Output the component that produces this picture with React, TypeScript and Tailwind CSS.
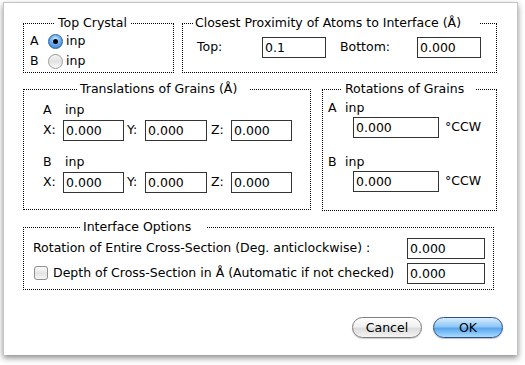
import React from "react"

const font = { fontFamily: '"DejaVu Sans", "Liberation Sans", sans-serif' }

function Field({ value, w }: { value: string; w: string }) {
  return (
    <input
      readOnly
      value={value}
      className={`${w} h-[21px] border border-[#333] bg-white pl-[2px] text-[12.5px] text-black outline-none`}
    />
  )
}

function Radio({ on }: { on?: boolean }) {
  if (on)
    return (
      <span className="flex h-[15px] w-[15px] items-center justify-center rounded-full border border-[#2f5fa8] bg-[radial-gradient(circle_at_50%_35%,#d6ecff_0%,#6fb1ee_45%,#2b73c9_100%)]">
        <span className="h-[5px] w-[5px] rounded-full bg-black" />
      </span>
    )
  return (
    <span className="h-[15px] w-[15px] rounded-full border border-[#9a9a9a] bg-[linear-gradient(#f4f4f4,#e2e2e2_50%,#fafafa)]" />
  )
}

export default function App() {
  return (
    <div className="h-[365px] w-[525px] overflow-hidden bg-white text-[12.5px] text-black" style={font}>
      <div className="ml-[3px] mt-[2px] h-[353px] w-[515px] border-l border-t border-r border-[#c4c4c4] bg-white shadow-[0_3px_6px_rgba(0,0,0,0.45)]">
        {/* row 1 */}
        <div className="ml-[19px] mt-[12px] flex items-start">
          <fieldset className="h-[58px] w-[151px] border border-dotted border-black">
            <legend className="ml-[31px] px-[3px] leading-[16px]">Top Crystal</legend>
            <div className="flex h-[20px] items-center pl-[6px]">
              <span className="w-[18px]">A</span>
              <Radio on />
              <span className="ml-[3px]">inp</span>
            </div>
            <div className="flex h-[20px] items-center pl-[6px]">
              <span className="w-[18px]">B</span>
              <Radio />
              <span className="ml-[3px]">inp</span>
            </div>
          </fieldset>
          <fieldset className="ml-[8px] h-[58px] w-[315px] border border-dotted border-black">
            <legend className="ml-[10px] pl-[2px] pr-[18px] leading-[16px]">Closest Proximity of Atoms to Interface (Å)</legend>
            <div className="mt-[6px] flex items-center">
              <span className="ml-[14px] w-[65px]">Top:</span>
              <Field value="0.1" w="w-[64px]" />
              <span className="ml-[14px] w-[77px]">Bottom:</span>
              <Field value="0.000" w="w-[64px]" />
            </div>
          </fieldset>
        </div>

        {/* row 2 */}
        <div className="ml-[19px] mt-[8px] flex items-start">
          <fieldset className="h-[129px] w-[288px] border border-dotted border-black">
            <legend className="ml-[53px] pl-[3px] pr-[13px] leading-[16px]">Translations of Grains (Å)</legend>
            {[
              { k: "A", mt: "mt-[4px]" },
              { k: "B", mt: "mt-[12px]" },
            ].map((g) => (
              <div key={g.k} className={`${g.mt} pl-[19px]`}>
                <div className="flex h-[18px] items-center">
                  <span className="w-[22px]">{g.k}</span>
                  <span>inp</span>
                </div>
                <div className="mt-[1px] flex h-[21px] items-center">
                  <span className="w-[20px]">X:</span>
                  <Field value="0.000" w="w-[61px]" />
                  <span className="ml-[3px] w-[18px]">Y:</span>
                  <Field value="0.000" w="w-[62px]" />
                  <span className="ml-[4px] w-[20px]">Z:</span>
                  <Field value="0.000" w="w-[61px]" />
                </div>
              </div>
            ))}
          </fieldset>
          <fieldset className="ml-[11px] h-[130px] w-[175px] border border-dotted border-black">
            <legend className="ml-[19px] pl-[3px] pr-[12px] leading-[16px]">Rotations of Grains</legend>
            {[
              { k: "A", mt: "mt-[2px]" },
              { k: "B", mt: "mt-[15px]" },
            ].map((g) => (
              <div key={g.k} className={`${g.mt} pl-[5px]`}>
                <div className="flex h-[18px] items-center">
                  <span className="w-[17px]">{g.k}</span>
                  <span>inp</span>
                </div>
                <div className="flex h-[21px] items-center pl-[25px]">
                  <Field value="0.000" w="w-[86px]" />
                  <span className="ml-[6px]">°CCW</span>
                </div>
              </div>
            ))}
          </fieldset>
        </div>

        {/* row 3 */}
        <fieldset className="ml-[19px] mt-[8px] h-[71px] w-[471px] border border-dotted border-black">
          <legend className="ml-[56px] pl-[3px] pr-[15px] leading-[16px]">Interface Options</legend>
          <div className="mt-[2px] flex h-[22px] items-center pl-[9px] pr-[8px]">
            <span className="flex-1 whitespace-nowrap">Rotation of Entire Cross-Section (Deg. anticlockwise) :</span>
            <Field value="0.000" w="w-[78px]" />
          </div>
          <div className="mt-[3px] flex h-[22px] items-center pl-[10px] pr-[8px]">
            <span className="h-[14px] w-[14px] rounded-[3px] border border-[#8e8e8e] bg-[linear-gradient(#fbfbfb,#e4e4e4_55%,#f6f6f6)]" />
            <span className="ml-[5px] flex-1 whitespace-nowrap">Depth of Cross-Section in Å (Automatic if not checked)</span>
            <Field value="0.000" w="w-[78px]" />
          </div>
        </fieldset>

        {/* buttons */}
        <div className="mt-[27px] flex justify-end gap-[11px] pr-[14px]">
          <button className="h-[21px] w-[70px] rounded-full border border-[#7d7d7d] bg-[linear-gradient(#ffffff,#f0f0f0_45%,#dcdcdc_55%,#f4f4f4)] leading-[19px] shadow-[0_1px_1px_rgba(0,0,0,0.2)]">
            Cancel
          </button>
          <button className="h-[21px] w-[70px] rounded-full border border-[#2d4f8e] bg-[linear-gradient(#d8ecff,#8fc6f7_45%,#5aa7ee_55%,#a8dcff)] leading-[19px] shadow-[0_1px_1px_rgba(0,0,0,0.25)]">
            OK
          </button>
        </div>
      </div>
    </div>
  )
}
